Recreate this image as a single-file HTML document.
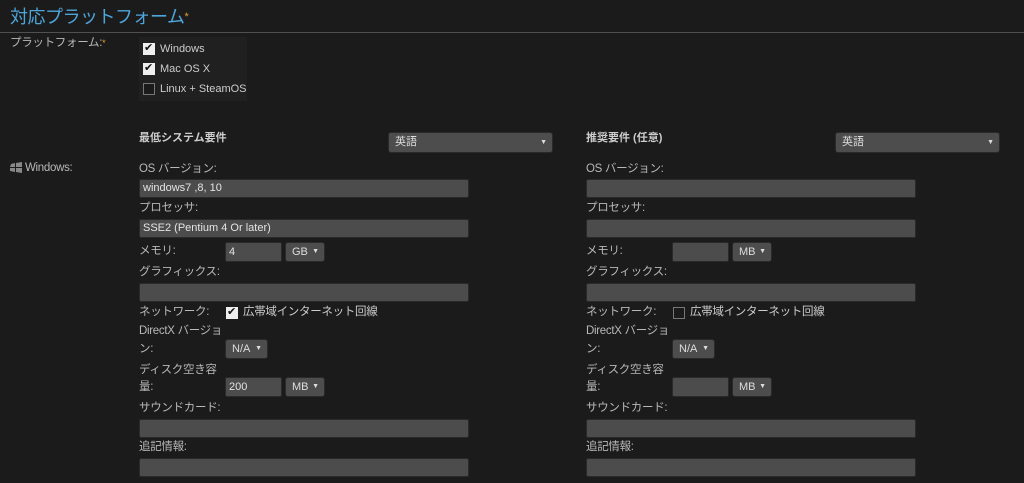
<!DOCTYPE html>
<html><head><meta charset="utf-8"><style>
body{margin:0;width:1024px;height:483px;background:#1b1b1b;font-family:"Liberation Sans","Noto Sans CJK JP",sans-serif;font-size:12px;color:#b8b8b8;position:relative;overflow:hidden}
.a{position:absolute;white-space:nowrap;line-height:14px}
.in{position:absolute;background:#4c4c4c;border:1px solid #2a2a2a;border-radius:2px;box-sizing:border-box;color:#e4e4e4;font-size:11px;line-height:17px;padding-left:3px}
.sel{position:absolute;background:#4d4d4d;border:1px solid #2a2a2a;border-radius:3px;box-sizing:border-box;color:#ddd;font-size:11px;line-height:18px;padding-left:6px}
.sel:after{content:"▼";position:absolute;right:5px;top:0;font-size:7px;color:#ddd}
.cb{position:absolute;width:10px;height:10px;border:1px solid #777;background:#1b1b1b}
.cb.on{background:#eee;border-color:#eee}
.cb.on:after{content:"✔";position:absolute;left:0;top:-3px;font-size:11px;color:#111;line-height:14px}
.req{color:#e8a030}
.lab{font-size:11.5px;letter-spacing:-0.3px}
</style></head><body>
<div class="a" style="left:10px;top:7px;font-size:18px;line-height:20px;color:#4ea5dc;letter-spacing:-0.5px">対応プラットフォーム<span class="req" style="font-size:11px;vertical-align:top">*</span></div>
<div class="a" style="left:0;top:32px;width:1024px;height:1px;background:#505050"></div>
<div class="a lab" style="left:10px;top:36px">プラットフォーム:<span class="req" style="font-size:9px;vertical-align:top">*</span></div>
<div class="a" style="left:139px;top:37px;width:108px;height:64px;background:#202020"></div>
<div class="cb on" style="left:143px;top:43px"></div><div class="a" style="left:160px;top:42px;color:#ccc;font-size:11px">Windows</div>
<div class="cb on" style="left:143px;top:63px"></div><div class="a" style="left:160px;top:62px;color:#ccc;font-size:11px">Mac OS X</div>
<div class="cb" style="left:143px;top:83px"></div><div class="a" style="left:160px;top:82px;color:#ccc;font-size:11px">Linux + SteamOS</div>

<div class="a" style="left:139px;top:131px;font-weight:bold;font-size:11px;color:#ccc">最低システム要件</div>
<div class="sel" style="left:388px;top:132px;width:165px;height:21px;line-height:19px">英語</div>
<div class="a" style="left:586px;top:131px;font-weight:bold;font-size:11px;color:#ccc">推奨要件 (任意)</div>
<div class="sel" style="left:835px;top:132px;width:165px;height:21px;line-height:19px">英語</div>

<svg class="a" style="left:9px;top:162px" width="14" height="12" viewBox="0 0 14 12"><path d="M2 2l4-1v4H1zM7 1l6-1v5H7zM1 6h5v4l-5-1zM7 6h6v5l-6-1z" fill="#888"/></svg>
<div class="a lab" style="left:25px;top:161px">Windows:</div>

<div class="a lab" style="left:139px;top:162px">OS バージョン:</div>
<div class="in" style="left:139px;top:179px;width:330px;height:19px">windows7 ,8, 10</div>
<div class="a lab" style="left:139px;top:201px">プロセッサ:</div>
<div class="in" style="left:139px;top:219px;width:330px;height:19px">SSE2 (Pentium 4 Or later)</div>
<div class="a lab" style="left:139px;top:244px">メモリ:</div>
<div class="in" style="left:225px;top:242px;width:57px;height:20px;line-height:18px">4</div>
<div class="sel" style="left:285px;top:242px;width:40px;height:20px">GB</div>
<div class="a lab" style="left:139px;top:265px">グラフィックス:</div>
<div class="in" style="left:139px;top:283px;width:330px;height:19px"></div>
<div class="a lab" style="left:139px;top:305px">ネットワーク:</div>
<div class="cb on" style="left:226px;top:307px"></div><div class="a lab" style="left:243px;top:305px;color:#ccc">広帯域インターネット回線</div>
<div class="a lab" style="left:139px;top:324px">DirectX バージョ</div>
<div class="a lab" style="left:139px;top:342px">ン:</div>
<div class="sel" style="left:225px;top:339px;width:43px;height:20px">N/A</div>
<div class="a lab" style="left:139px;top:363px">ディスク空き容</div>
<div class="a lab" style="left:139px;top:380px">量:</div>
<div class="in" style="left:225px;top:377px;width:57px;height:20px;line-height:18px">200</div>
<div class="sel" style="left:285px;top:377px;width:40px;height:20px">MB</div>
<div class="a lab" style="left:139px;top:401px">サウンドカード:</div>
<div class="in" style="left:139px;top:419px;width:330px;height:19px"></div>
<div class="a lab" style="left:139px;top:440px">追記情報:</div>
<div class="in" style="left:139px;top:458px;width:330px;height:19px"></div>

<div class="a lab" style="left:586px;top:162px">OS バージョン:</div>
<div class="in" style="left:586px;top:179px;width:330px;height:19px"></div>
<div class="a lab" style="left:586px;top:201px">プロセッサ:</div>
<div class="in" style="left:586px;top:219px;width:330px;height:19px"></div>
<div class="a lab" style="left:586px;top:244px">メモリ:</div>
<div class="in" style="left:672px;top:242px;width:57px;height:20px"></div>
<div class="sel" style="left:732px;top:242px;width:40px;height:20px">MB</div>
<div class="a lab" style="left:586px;top:265px">グラフィックス:</div>
<div class="in" style="left:586px;top:283px;width:330px;height:19px"></div>
<div class="a lab" style="left:586px;top:305px">ネットワーク:</div>
<div class="cb" style="left:673px;top:307px"></div><div class="a lab" style="left:690px;top:305px;color:#ccc">広帯域インターネット回線</div>
<div class="a lab" style="left:586px;top:324px">DirectX バージョ</div>
<div class="a lab" style="left:586px;top:342px">ン:</div>
<div class="sel" style="left:672px;top:339px;width:43px;height:20px">N/A</div>
<div class="a lab" style="left:586px;top:363px">ディスク空き容</div>
<div class="a lab" style="left:586px;top:380px">量:</div>
<div class="in" style="left:672px;top:377px;width:57px;height:20px"></div>
<div class="sel" style="left:732px;top:377px;width:40px;height:20px">MB</div>
<div class="a lab" style="left:586px;top:401px">サウンドカード:</div>
<div class="in" style="left:586px;top:419px;width:330px;height:19px"></div>
<div class="a lab" style="left:586px;top:440px">追記情報:</div>
<div class="in" style="left:586px;top:458px;width:330px;height:19px"></div>
</body></html>
